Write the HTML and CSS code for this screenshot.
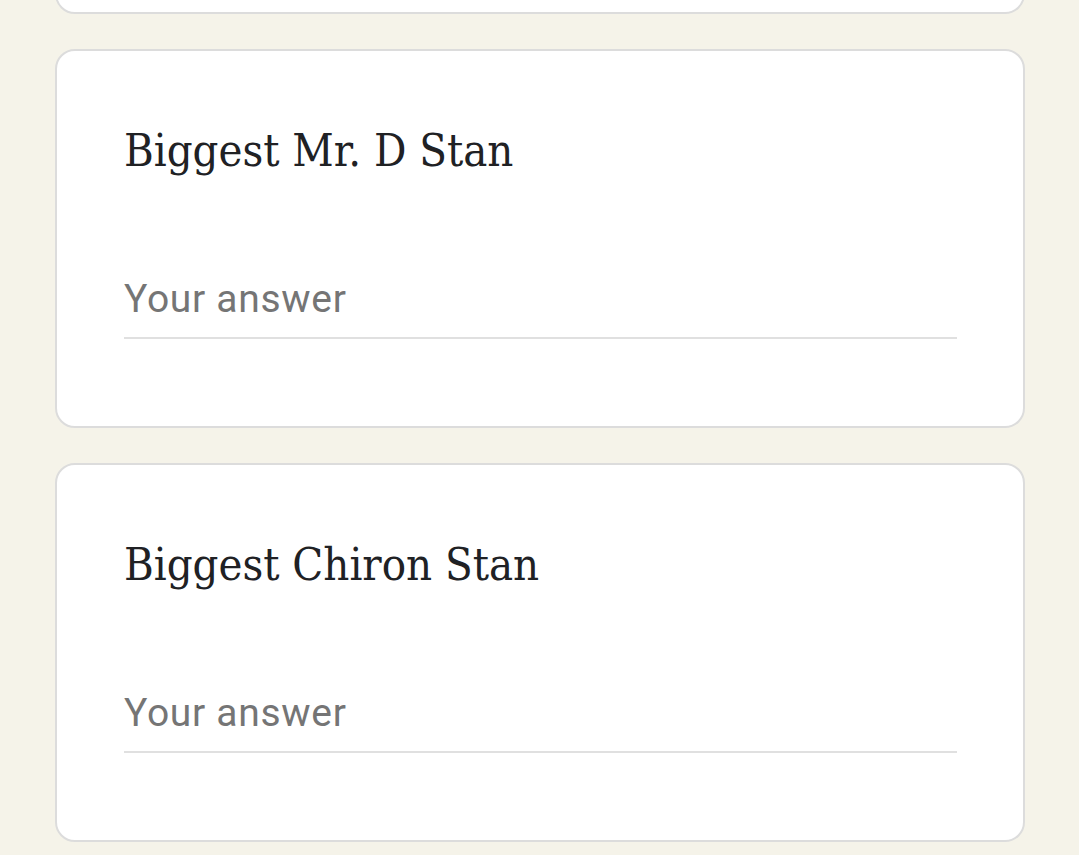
FILE: index.html
```html
<!DOCTYPE html>
<html lang="en">
<head>
<meta charset="utf-8">
<title>Form</title>
<link rel="stylesheet" href="styles.css">
</head>
<body>
  <main class="form">
    <section class="card card--previous">
      <h2 class="question-title">Question</h2>
      <div class="answer"><span class="answer-placeholder">Your answer</span></div>
    </section>
    <section class="card">
      <h2 class="question-title">Biggest Mr. D Stan</h2>
      <div class="answer"><span class="answer-placeholder">Your answer</span></div>
    </section>
    <section class="card">
      <h2 class="question-title">Biggest Chiron Stan</h2>
      <div class="answer"><span class="answer-placeholder">Your answer</span></div>
    </section>
  </main>
</body>
</html>
```
FILE: styles.css
```css
html, body {
  margin: 0;
  padding: 0;
  background: #f5f3e9;
}

body {
  overflow: hidden;
  height: 855px;
}

.form {
  display: flex;
  flex-direction: column;
  gap: 35px;
  margin: -365px 54px 0 55px;
}

.card {
  background: #ffffff;
  border: 2px solid #dcdcdc;
  border-radius: 20px;
  padding: 72px 66px 87px 67px;
}

.card--previous .question-title,
.card--previous .answer-placeholder {
  visibility: hidden;
}

.question-title {
  margin: 0 0 96px 0;
  font-family: "DejaVu Serif", serif;
  font-stretch: condensed;
  font-weight: 400;
  font-size: 45px;
  line-height: 56px;
  color: #202124;
}

.answer {
  border-bottom: 2px solid #e0e0e0;
  padding-bottom: 14px;
}

.answer-placeholder {
  display: block;
  font-family: Roboto, "Liberation Sans", sans-serif;
  font-size: 39px;
  line-height: 48px;
  letter-spacing: 0.7px;
  color: #757575;
}
```
